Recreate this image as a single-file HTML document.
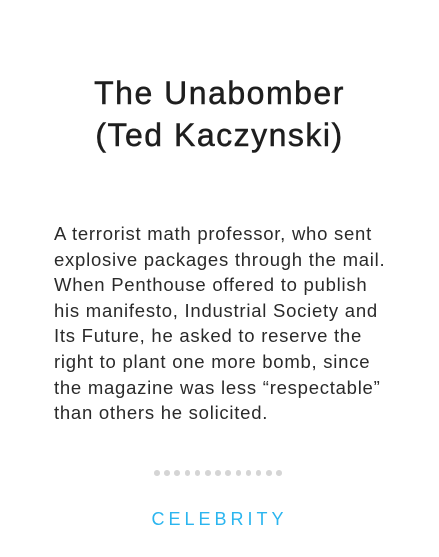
<!DOCTYPE html>
<html><head><style>
body{margin:0;width:439px;height:557px;background:#fff;font-family:"Liberation Sans",sans-serif;color:#222;position:relative;overflow:hidden}
h1{position:absolute;top:72px;left:0;width:439px;margin:0;text-align:center;font-weight:normal;font-size:32px;line-height:42px;color:#1e1e1e;letter-spacing:1.5px;-webkit-text-stroke:0.5px #1e1e1e}
p{position:absolute;top:221px;left:54px;width:380px;margin:0;font-size:18.5px;line-height:25.6px;color:#2a2a2a;letter-spacing:0.75px;white-space:nowrap}
.dots{position:absolute;top:470px;left:154px;display:flex;gap:4.6px}
.dots span{width:5.6px;height:5.6px;border-radius:50%;background:#d5d5d5}
.cat{position:absolute;top:509px;left:0;width:439px;text-align:center;font-size:18px;letter-spacing:4px;color:#2bb5ef}
</style></head><body>
<h1>The Unabomber<br>(Ted Kaczynski)</h1>
<p>A terrorist math professor, who sent<br>explosive packages through the mail.<br>When Penthouse offered to publish<br>his manifesto, Industrial Society and<br>Its Future, he asked to reserve the<br>right to plant one more bomb, since<br>the magazine was less “respectable”<br>than others he solicited.</p>
<div class="dots"><span></span><span></span><span></span><span></span><span></span><span></span><span></span><span></span><span></span><span></span><span></span><span></span><span></span></div>
<div class="cat">CELEBRITY</div>
</body></html>
